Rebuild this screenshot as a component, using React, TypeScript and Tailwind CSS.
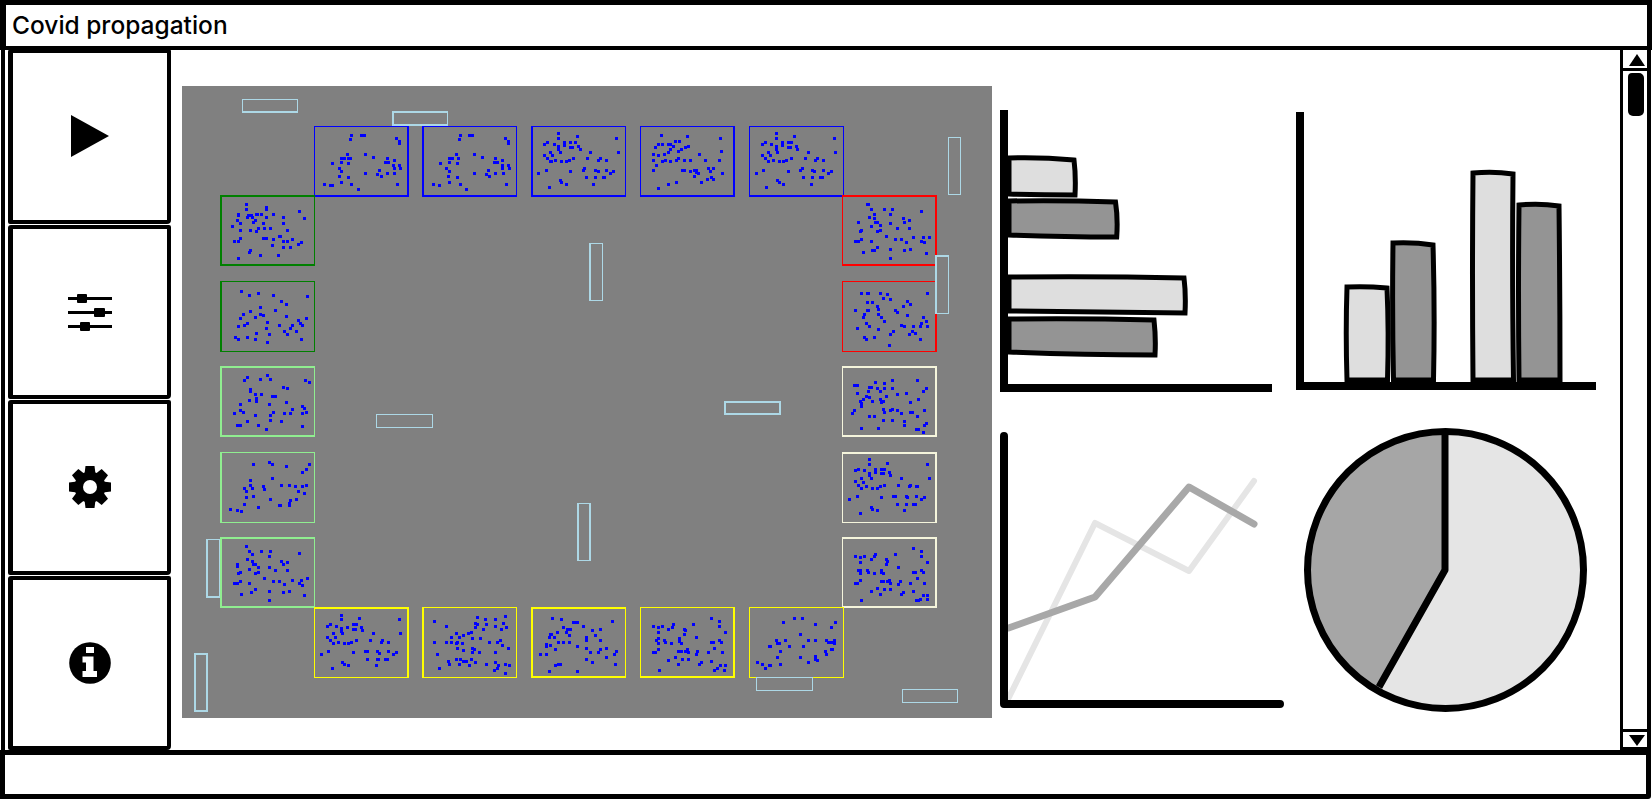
type Cell = { left: number; top: number; edge: string; view: string; dots: string };

const blue = 'border-[#0000ff]';
const green = 'border-[#008000]';
const lime = 'border-[#90ee90]';
const red = 'border-[#ff0000]';
const cream = 'border-[#f5f5dc]';
const yellow = 'border-[#ffff00]';

// dots are in crop pixels, the view maps them back onto a 95x71 room
const cells: Cell[] = [
  {
    left: 132, top: 40, edge: `${blue} border-t border-l border-r-2 border-b-2`, view: '402 123 285 213',
    dots: '514,152 511,163 544,152 553,152 649,160 658,170 658,176 502,208 556,208 580,217 622,221 484,221 493,220 505,220 511,220 484,232 457,236 505,236 617,231 625,231 643,227 640,241 658,241 643,250 661,250 478,250 484,259 598,255 556,265 592,268 604,274 622,265 643,265 478,274 505,277 484,292 433,298 451,301 457,301 514,298 535,312 652,298',
  },
  {
    left: 240, top: 40, edge: `${blue} border-t border-l-2 border-r border-b-2`, view: '726 123 285 213',
    dots: '841,152 838,163 868,152 877,152 976,160 985,170 985,176 829,208 883,208 907,217 946,221 808,221 817,220 835,220 808,232 781,236 832,236 943,231 951,231 967,227 966,241 985,241 966,250 988,250 799,250 808,259 925,255 883,265 919,268 928,274 946,265 970,265 805,274 832,277 808,292 760,298 778,301 841,298 859,312 979,298',
  },
  {
    left: 349, top: 40, edge: `${blue} border-t border-l-2 border-r border-b-2`, view: '18 16.8 285 198.8',
    dots: '100,38 100,52 157,46 274,52 58,68 67,64 88,68 100,75 100,83 118,63 118,72 136,64 151,64 136,76 142,76 160,73 166,82 76,91 106,91 196,91 280,91 58,100 82,100 67,108 91,114 76,117 79,117 109,117 124,117 133,114 146,108 187,108 220,113 226,108 244,114 64,140 40,150 136,144 175,140 178,136 211,140 220,144 244,140 265,144 256,150 184,161 211,161 235,161 238,161 106,170 109,175 124,181 73,189 205,181',
  },
  {
    left: 458, top: 40, edge: `${blue} border-t border-l border-r-2 border-b-2`, view: '345 16.8 285 198.8',
    dots: '409,44 487,46 586,52 451,60 463,60 400,69 412,69 430,69 436,69 391,77 445,73 481,77 490,73 469,82 436,82 460,87 430,91 588,87 385,97 400,100 418,97 523,97 460,108 385,114 412,117 421,114 436,117 454,114 478,114 496,114 541,114 583,114 394,128 385,140 472,140 478,140 508,140 514,140 550,136 565,136 496,144 514,146 556,144 592,150 508,158 519,150 547,167 559,161 565,167 529,175 454,175 430,181 400,193',
  },
  {
    left: 567, top: 40, edge: `${blue} border-t border-x border-b-2`, view: '672 16.8 285 198.8',
    dots: '754,38 754,52 808,46 928,52 712,68 721,64 739,68 754,75 754,83 772,63 772,72 790,64 799,64 790,76 796,76 814,73 817,82 730,91 757,91 850,91 931,91 712,100 735,100 721,108 745,114 730,117 763,117 775,117 784,114 799,108 841,108 871,113 877,108 895,114 715,140 694,150 790,144 826,140 832,136 862,140 868,144 895,140 919,144 910,150 835,161 862,161 886,161 892,161 757,170 763,175 775,181 724,189 859,181',
  },
  {
    left: 38, top: 109, edge: `${green} border-l-2 border-t-2 border-r border-b-2`, view: '120 330 285 213',
    dots: '199,358 199,373 259,367 259,373 358,379 175,388 175,391 205,391 214,391 202,397 217,397 229,388 232,388 244,388 280,388 259,397 310,397 373,400 172,406 226,406 181,415 220,412 250,415 310,415 157,424 181,436 211,436 229,439 235,430 253,430 271,430 322,436 250,459 259,459 181,459 175,469 163,469 280,463 298,454 301,454 310,469 322,469 337,463 355,478 364,472 277,481 310,487 331,487 211,496 208,502 241,511 295,511 175,520',
  },
  {
    left: 38, top: 195, edge: `${green} border-l-2 border-t border-r border-b`, view: '15 3 285 213',
    dots: '79,34 103,45 130,40 175,45 277,49 199,64 214,73 136,82 106,94 181,91 85,103 136,103 145,106 76,115 121,112 214,109 250,121 274,115 157,126 97,130 88,136 70,139 193,136 232,136 256,130 262,136 226,145 154,145 208,154 124,160 163,163 244,154 217,163 61,172 70,178 97,172 121,178 157,187 259,178',
  },
  {
    left: 38, top: 280, edge: `${lime} border-l-2 border-t-2 border-r border-b-2`, view: '15 258 285 213',
    dots: '97,292 88,301 136,297 157,286 166,297 272,301 283,307 205,321 217,325 106,328 106,334 121,343 139,343 172,349 181,349 103,361 125,355 125,364 214,367 76,373 163,373 262,378 268,385 232,388 76,391 85,397 58,400 175,397 208,400 226,400 262,400 274,397 121,406 166,406 166,421 97,424 199,424 67,435 76,435 130,435 262,439 154,448',
  },
  {
    left: 38, top: 366, edge: `${lime} border-l-2 border-t border-r border-b`, view: '660 156 285 213',
    dots: '760,193 808,188 817,193 859,199 928,193 919,208 907,217 817,235 751,241 751,256 844,256 868,256 886,259 907,259 919,256 733,265 757,265 790,259 793,268 739,274 895,274 913,279 739,292 760,289 811,298 889,298 871,301 868,310 733,313 838,316 841,316 868,316 775,322 692,327 712,331 724,334',
  },
  {
    left: 38, top: 451, edge: `${lime} border-l-2 border-t-2 border-r border-b-2`, view: '660 411 285 213',
    dots: '739,440 748,454 784,454 811,454 757,463 808,469 898,460 742,478 757,484 844,484 862,487 712,493 712,499 760,493 766,493 850,493 775,502 808,502 748,508 826,511 862,511 715,520 721,517 766,520 775,517 793,535 721,544 703,550 712,550 748,550 820,544 838,544 853,553 877,541 904,541 898,550 907,556 922,535 766,568 808,574 754,577 724,583 850,577 868,574 913,587 808,601',
  },
  {
    left: 660, top: 109, edge: `${red} border-l border-t-2 border-r-2 border-b-2`, view: '426 315 285 213',
    dots: '502,343 505,343 514,358 553,358 577,358 664,364 523,373 571,373 508,382 523,385 610,385 628,391 475,398 526,397 532,397 571,400 613,397 541,406 514,410 592,415 628,415 484,421 481,424 532,424 541,421 559,439 640,443 670,443 688,443 484,448 586,448 604,448 466,454 475,454 514,454 619,457 664,454 673,457 532,472 517,481 523,481 571,478 613,481 631,478 490,487 679,490 571,505',
  },
  {
    left: 660, top: 195, edge: `${red} border-l border-t border-r-2 border-b`, view: '426 573 285 213',
    dots: '484,610 502,610 505,610 541,610 562,614 682,610 550,625 571,628 622,634 502,638 517,638 631,643 532,649 610,649 466,662 502,662 505,662 535,658 586,662 592,667 493,673 535,673 622,676 490,682 544,682 670,682 553,695 679,695 499,700 664,700 508,709 604,706 613,709 640,709 661,709 682,709 472,715 535,719 580,724 637,724 571,733 628,733 646,730 493,742 499,748 523,742 661,748 568,766',
  },
  {
    left: 660, top: 280, edge: `${cream} border-l border-t-2 border-r-2 border-b-2`, view: '6 18 285 213',
    dots: '106,67 157,61 231,61 43,76 52,76 88,81 94,81 133,70 112,85 133,85 157,85 259,85 84,94 121,94 250,94 52,100 172,103 199,100 139,109 79,109 88,113 70,118 61,125 64,130 97,124 121,118 124,127 130,124 235,118 211,127 64,139 130,148 133,157 151,151 157,148 172,151 43,151 37,160 184,160 211,157 217,157 253,151 88,170 103,170 231,170 130,181 157,181 193,184 193,196 253,195 259,190 64,205 115,205 229,208 235,208 250,217',
  },
  {
    left: 660, top: 366, edge: `${cream} border-l border-t-2 border-r-2 border-b`, view: '6 276 285 213',
    dots: '88,298 142,309 88,313 262,313 46,331 55,328 73,331 106,328 124,328 133,328 106,337 88,340 88,346 124,341 130,341 148,337 151,346 94,355 64,355 184,355 268,355 46,364 70,367 55,376 79,379 64,385 97,385 112,385 121,379 133,376 175,376 208,379 211,376 229,379 232,379 52,409 28,418 124,412 160,409 166,409 199,409 202,412 229,409 253,412 244,418 172,433 199,433 220,433 226,433 94,442 97,448 112,451 61,460 193,451',
  },
  {
    left: 660, top: 451, edge: `${cream} border-l border-t-2 border-r-2 border-b-2`, view: '6 531 285 213',
    dots: '220,565 244,574 166,583 106,583 46,589 61,593 73,589 103,590 94,598 244,589 139,598 142,604 61,607 139,613 262,607 175,622 55,631 61,631 82,631 85,636 124,631 124,637 61,640 103,640 130,640 220,637 226,637 244,631 250,637 231,655 61,661 124,664 130,664 148,661 142,664 181,664 46,670 52,670 151,670 175,673 211,670 253,670 112,685 133,688 151,688 94,694 220,694 190,697 184,703 121,703 250,706 262,706 241,718 229,721 235,721 262,718 64,721',
  },
  {
    left: 132, top: 521, edge: `${yellow} border-l border-t-2 border-r-2 border-b`, view: '402 261 285 213',
    dots: '484,285 484,298 538,295 658,298 451,313 442,319 469,319 502,322 520,313 529,313 484,325 484,334 544,322 547,331 520,328 526,328 580,341 661,341 460,341 487,341 442,352 466,352 451,361 460,370 475,366 493,370 505,370 514,366 529,361 571,361 607,361 604,366 625,366 424,403 445,394 520,398 556,394 562,394 592,394 598,400 625,394 649,398 640,403 562,418 592,418 595,418 616,418 622,418 487,427 493,433 505,436 589,436 457,445',
  },
  {
    left: 240, top: 521, edge: `${yellow} border-l-2 border-t border-r border-b`, view: '726 261 285 213',
    dots: '892,292 976,289 763,304 916,298 946,298 886,309 892,313 919,313 970,309 799,319 886,322 946,319 979,322 964,328 910,328 829,341 873,337 865,341 850,346 814,352 838,352 877,355 901,355 763,366 799,366 814,366 832,366 829,370 847,370 928,366 952,366 960,361 966,376 985,385 832,385 850,391 877,385 883,388 877,398 898,398 946,398 772,403 805,423 808,433 829,418 841,418 850,423 859,423 874,418 886,427 838,433 868,436 919,433 946,427 955,436 976,433 988,436 952,445 943,451 778,445 976,460',
  },
  {
    left: 349, top: 521, edge: `${yellow} border-l-2 border-t-2 border-r border-b-2`, view: '18 1363.6 285 198.8',
    dots: '82,1396 109,1399 262,1404 151,1408 145,1408 157,1408 175,1418 115,1421 127,1427 136,1427 202,1430 225,1427 97,1435 124,1435 76,1440 79,1440 73,1449 88,1449 133,1444 211,1444 184,1449 184,1457 100,1462 115,1462 133,1462 225,1458 64,1468 64,1473 76,1472 157,1474 91,1483 184,1480 226,1483 244,1480 196,1492 220,1492 274,1488 46,1497 64,1497 268,1497 244,1505 184,1511 202,1519 271,1525 91,1528 100,1525 106,1525 73,1545 157,1545',
  },
  {
    left: 458, top: 521, edge: `${yellow} border-l border-t border-r-2 border-b-2`, view: '345 1363.6 285 198.8',
    dots: '559,1396 583,1404 583,1418 505,1413 445,1413 385,1418 400,1421 412,1418 430,1427 441,1421 478,1427 481,1430 400,1435 478,1440 601,1435 514,1449 400,1452 394,1458 418,1458 421,1462 463,1452 463,1460 400,1466 439,1466 469,1466 559,1462 565,1462 583,1458 589,1462 568,1480 487,1483 400,1483 385,1492 391,1492 460,1488 469,1488 481,1488 490,1492 517,1488 514,1497 550,1492 592,1492 451,1505 472,1511 490,1511 430,1514 559,1516 529,1519 523,1525 460,1525 586,1528 601,1528 577,1535 568,1541 598,1541 403,1541',
  },
  {
    left: 567, top: 521, edge: `${yellow} border`, view: '672 1363.6 285 198.8',
    dots: '808,1396 832,1396 775,1408 871,1413 931,1407 919,1421 826,1440 754,1458 757,1466 763,1466 781,1458 850,1458 871,1458 904,1458 910,1462 919,1462 928,1458 928,1465 733,1474 736,1474 793,1474 835,1474 766,1488 901,1488 904,1497 919,1483 922,1483 757,1505 826,1505 871,1503 871,1510 877,1514 850,1519 697,1519 712,1525 721,1536 733,1528 736,1528 766,1525',
  },
];

const walls = [
  { left: 60, top: 13, size: 'w-[56px] h-[14px]', edge: 'border border-b-2' },
  { left: 210, top: 25, size: 'w-[56px] h-[15px]', edge: 'border-2 border-r' },
  { left: 766, top: 51, size: 'w-[13px] h-[58px]', edge: 'border' },
  { left: 753, top: 169, size: 'w-[14px] h-[59px]', edge: 'border border-l-2 border-t-2' },
  { left: 407, top: 157, size: 'w-[14px] h-[58px]', edge: 'border border-l-2' },
  { left: 542, top: 315, size: 'w-[57px] h-[14px]', edge: 'border-2' },
  { left: 395, top: 417, size: 'w-[14px] h-[58px]', edge: 'border-x-2 border-y' },
  { left: 24, top: 453, size: 'w-[14px] h-[59px]', edge: 'border border-l-2 border-b-2' },
  { left: 12, top: 567, size: 'w-[14px] h-[59px]', edge: 'border-2' },
  { left: 194, top: 328, size: 'w-[57px] h-[14px]', edge: 'border' },
  { left: 574, top: 591, size: 'w-[57px] h-[14px]', edge: 'border' },
  { left: 720, top: 603, size: 'w-[56px] h-[14px]', edge: 'border' },
];

function Room({ cell }: { cell: Cell }) {
  const [ox, oy, , viewHeight] = cell.view.split(' ').map(Number);
  const yScale = viewHeight / 71;
  return (
    <div className="absolute h-[71px] w-[95px]" style={{ left: cell.left, top: cell.top }}>
      <svg className="block h-[71px] w-[95px]" viewBox="0 0 95 71" shapeRendering="crispEdges">
        {cell.dots.split(' ').map((dot, i) => {
          const [x, y] = dot.split(',').map(Number);
          return (
            <rect
              key={i}
              x={Math.round((x - ox) / 3 - 1.5)}
              y={Math.round((y - oy) / yScale - 1.5)}
              width={3}
              height={3}
              fill="#0000ff"
            />
          );
        })}
      </svg>
      <div className={`absolute inset-0 ${cell.edge}`} />
    </div>
  );
}

function SideButton({ children }: { children: React.ReactNode }) {
  return (
    <button className="flex flex-1 items-center justify-center rounded-[3px_2px_4px_2px] border-[4px] border-l-[5px] border-black bg-white text-black">
      {children}
    </button>
  );
}

function Sliders() {
  return (
    <svg width="44" height="38" viewBox="0 0 44 38">
      <rect x="0" y="4" width="44" height="3" />
      <rect x="0" y="18" width="44" height="3" />
      <rect x="0" y="32" width="44" height="3" />
      <rect x="9" y="1" width="10" height="9" rx="1" />
      <rect x="26" y="15" width="11" height="9" rx="1" />
      <rect x="12" y="29" width="10" height="9" rx="1" />
    </svg>
  );
}

function Gear() {
  const angles = [0, 45, 90, 135, 180, 225, 270, 315];
  return (
    <svg width="42" height="42" viewBox="0 0 42 42">
      {angles.map((angle) => (
        <path key={angle} d="M16.5 0 H25.5 L27 12 H15 Z" transform={`rotate(${angle} 21 21)`} />
      ))}
      <circle cx="21" cy="21" r="15.5" />
      <circle cx="21" cy="21" r="7" fill="#fff" />
    </svg>
  );
}

function Info() {
  return (
    <svg width="42" height="42" viewBox="0 0 42 42">
      <circle cx="21" cy="21" r="20.8" />
      <g fill="#fff">
        <rect x="17" y="5" width="8" height="6" />
        <path d="M13.5 14.5 H24.5 V29 H28 V35 H13.5 V29 H17 V20.5 H13.5 Z" />
      </g>
    </svg>
  );
}

function HBars() {
  return (
    <svg width="272" height="282" viewBox="0 0 272 282">
      <g stroke="#000" strokeWidth="5">
        <path d="M9 48 Q40 47 74 50 Q76 66 75 85 Q40 85 9 84 Z" fill="#dedede" />
        <path d="M9 91 Q60 90 115.5 92 Q118 108 116.7 127 Q60 127 9 125 Z" fill="#949494" />
        <path d="M9 167 Q100 166 184 168 Q186 184 185 203 Q100 202 9 201 Z" fill="#dedede" />
        <path d="M9 209 Q80 208 154 210 Q156 228 155 245 Q80 245 9 242 Z" fill="#949494" />
      </g>
      <rect x="0" y="0" width="8" height="282" />
      <rect x="0" y="274" width="272" height="8" />
    </svg>
  );
}

function VBars() {
  return (
    <svg width="300" height="278" viewBox="0 0 300 278">
      <g stroke="#000" strokeWidth="5">
        <path d="M51 175 Q70 174 91 176 Q93 220 91.5 268 H51 Q49.5 220 51 175 Z" fill="#dedede" />
        <path d="M97 131 Q118 130 137 133 Q139 200 137.5 268 H97.5 Q96 200 97 131 Z" fill="#949494" />
        <path d="M177 61 Q198 59 217 62 Q216 160 217.5 268 H177 Q176 160 177 61 Z" fill="#dedede" />
        <path d="M223 93 Q244 91 263 94 Q264 180 264 268 H223 Q222 180 223 93 Z" fill="#949494" />
      </g>
      <rect x="0" y="0" width="8" height="278" />
      <rect x="0" y="270" width="300" height="8" />
    </svg>
  );
}

function Lines() {
  return (
    <svg width="284" height="276" viewBox="0 0 284 276" fill="none" strokeLinecap="round" strokeLinejoin="round">
      <path d="M8.6 266 L95 91 L189 139 L254 49" stroke="#e5e5e5" strokeWidth="6" />
      <path d="M8.6 196 L95 165 L189 55 L254 92" stroke="#a8a8a8" strokeWidth="7" />
      <path d="M4 4 V272 H280" stroke="#000" strokeWidth="8" />
    </svg>
  );
}

function Pie() {
  return (
    <svg width="284" height="285" viewBox="0 0 284 285">
      <ellipse cx="141.5" cy="142" rx="138" ry="138.5" fill="#e5e5e5" />
      <path d="M141 142 L141 4 A138 138 0 0 0 73 262 Z" fill="#a6a6a6" />
      <ellipse cx="141.5" cy="142" rx="138" ry="138.5" fill="none" stroke="#000" strokeWidth="7" />
      <path d="M141 4 V142 L75 259" fill="none" stroke="#000" strokeWidth="7" strokeLinejoin="round" />
    </svg>
  );
}

export default function App() {
  return (
    <div className="flex h-[800px] w-[1652px] flex-col overflow-hidden bg-white font-['Inter',sans-serif] text-black">
      <div className="flex h-[50px] items-center border-[5px] border-b-4 border-l-[6px] border-black pl-[6px] text-[24.5px] font-medium leading-none">
        Covid propagation
      </div>

      <div className="ml-px mr-px flex h-[700px] border-x-4 border-black">
        <div className="-mt-px ml-[3px] flex h-[701px] w-[163px] flex-col gap-px">
          <SideButton>
            <svg width="38" height="42" viewBox="0 0 38 42">
              <polygon points="0,0 38,21 0,42" />
            </svg>
          </SideButton>
          <SideButton>
            <Sliders />
          </SideButton>
          <SideButton>
            <Gear />
          </SideButton>
          <SideButton>
            <Info />
          </SideButton>
        </div>

        <div className="flex flex-1 pl-[11px] pt-[36px]">
          <div className="relative h-[632px] w-[810px] shrink-0 bg-[#808080]">
            {cells.map((cell) => (
              <Room key={`${cell.left}-${cell.top}`} cell={cell} />
            ))}
            {walls.map((wall) => (
              <div
                key={`${wall.left}-${wall.top}`}
                className={`absolute border-[#add8e6] ${wall.size} ${wall.edge}`}
                style={{ left: wall.left, top: wall.top }}
              />
            ))}
          </div>

          <div className="ml-2 mt-6 grid h-fit grid-cols-[296px_308px] grid-rows-[318px_290px]">
            <HBars />
            <div className="mt-[2px]">
              <VBars />
            </div>
            <div className="mt-[4px]">
              <Lines />
            </div>
            <div className="ml-2">
              <Pie />
            </div>
          </div>
        </div>

        <div className="flex w-[27px] shrink-0 flex-col border-l-[3px] border-black">
          <div className="flex h-[21px] items-start justify-center border-b-[3px] border-black pt-1 pl-[3px]">
            <svg width="16" height="12" viewBox="0 0 16 12">
              <polygon points="8,0 16,12 0,12" />
            </svg>
          </div>
          <div className="flex-1 pl-[5px] pt-[2px]">
            <div className="h-[43px] w-4 rounded-[4px_5px_5px_5px] bg-black" />
          </div>
          <div className="flex h-[21px] items-end justify-center border-y-[3px] border-black pb-px pl-[3px]">
            <svg width="16" height="11" viewBox="0 0 16 11">
              <polygon points="0,0 16,0 8,11" />
            </svg>
          </div>
        </div>
      </div>

      <div className="mr-px h-[49px] rounded-br-[3px] border-[5px] border-black bg-white" />
    </div>
  );
}
